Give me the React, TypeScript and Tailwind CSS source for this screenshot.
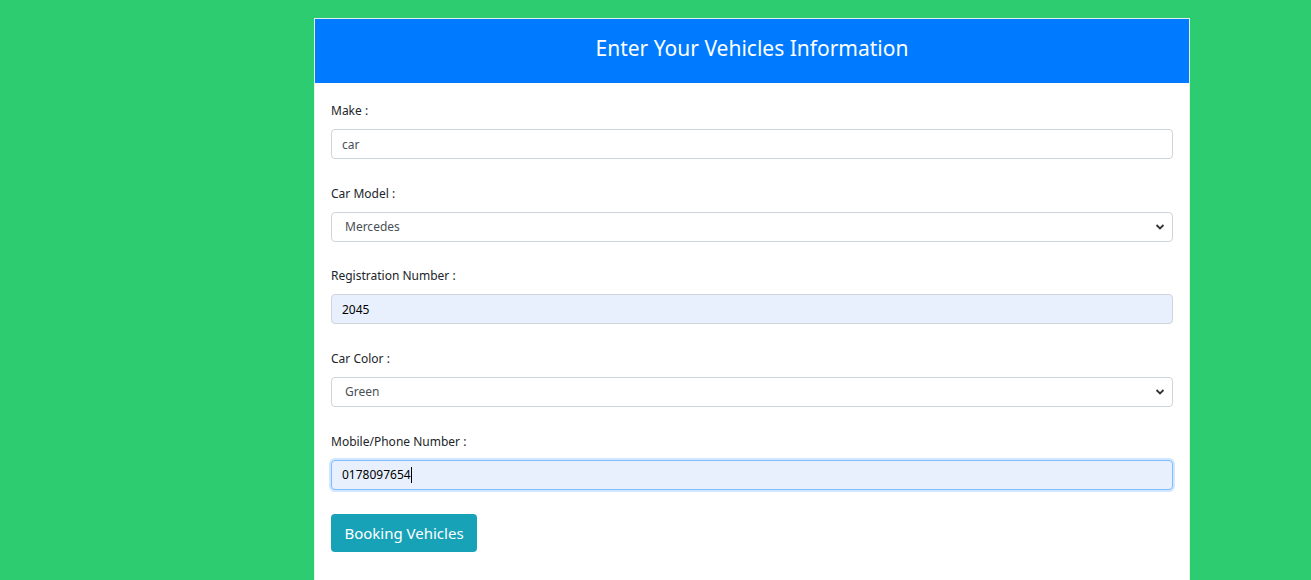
const Chevron = () => (
  <svg
    className="pointer-events-none absolute right-[8px] top-1/2 -translate-y-1/2"
    width="10"
    height="7"
    viewBox="0 0 10 7"
    fill="none"
  >
    <path d="M1.5 1.5 L5 5 L8.5 1.5" stroke="#333" strokeWidth="1.8" />
  </svg>
);

const Field = ({ label, children, tight }: { label: string; children: React.ReactNode; tight?: boolean }) => (
  <div className={tight ? "mb-[24px]" : "mb-[25px]"}>
    <label className="block h-[19px] pt-[1px] leading-[18px] mb-[9px] text-[12px] text-[#212529]">{label}</label>
    {children}
  </div>
);

export default function App() {
  return (
    <div className="min-h-[580px] bg-[#2ecc71] pt-[18px] font-['Noto_Sans',sans-serif]">
      <div className="ml-[314px] w-[876px] bg-white border-t border-l border-r border-[#e3f2e8]">
        {/* Header */}
        <div className="h-[64px] bg-[#007bff] flex items-center justify-center pb-[5px]">
          <h2 className="text-white text-[21px]">Enter Your Vehicles Information</h2>
        </div>

        {/* Form */}
        <div className="px-[16px] pt-[18px] pb-[30px]">
          <Field label="Make :">
            <input
              defaultValue="car"
              className="w-full h-[30px] px-[10px] text-[12px] text-[#495057] border border-[#ced4da] rounded-[4px] bg-white outline-none"
            />
          </Field>

          <Field label="Car Model :" tight>
            <div className="relative">
              <select
                defaultValue="Mercedes"
                className="w-full h-[30px] pl-[13px] text-[12px] text-[#495057] border border-[#ced4da] rounded-[4px] bg-white outline-none appearance-none"
              >
                <option>Mercedes</option>
                <option>BMW</option>
                <option>Toyota</option>
              </select>
              <Chevron />
            </div>
          </Field>

          <Field label="Registration Number :">
            <input
              defaultValue="2045"
              className="w-full h-[30px] px-[10px] text-[12px] text-black border border-[#ced4da] rounded-[4px] bg-[#e8f0fe] outline-none"
            />
          </Field>

          <Field label="Car Color :">
            <div className="relative">
              <select
                defaultValue="Green"
                className="w-full h-[30px] pl-[13px] text-[12px] text-[#495057] border border-[#ced4da] rounded-[4px] bg-white outline-none appearance-none"
              >
                <option>Green</option>
                <option>Red</option>
                <option>Black</option>
              </select>
              <Chevron />
            </div>
          </Field>

          <Field label="Mobile/Phone Number :" tight>
            <div className="w-full h-[30px] px-[10px] flex items-center text-[12px] text-black border border-[#80bdff] rounded-[4px] bg-[#e8f0fe] shadow-[0_0_0_2px_rgba(0,123,255,0.18)]">
              0178097654
              <span className="inline-block w-px h-[16px] bg-black" />
            </div>
          </Field>

          <button className="h-[38px] w-[146px] bg-[#17a2b8] text-white text-[15px] rounded-[4px]">
            Booking Vehicles
          </button>
        </div>
      </div>
    </div>
  );
}
